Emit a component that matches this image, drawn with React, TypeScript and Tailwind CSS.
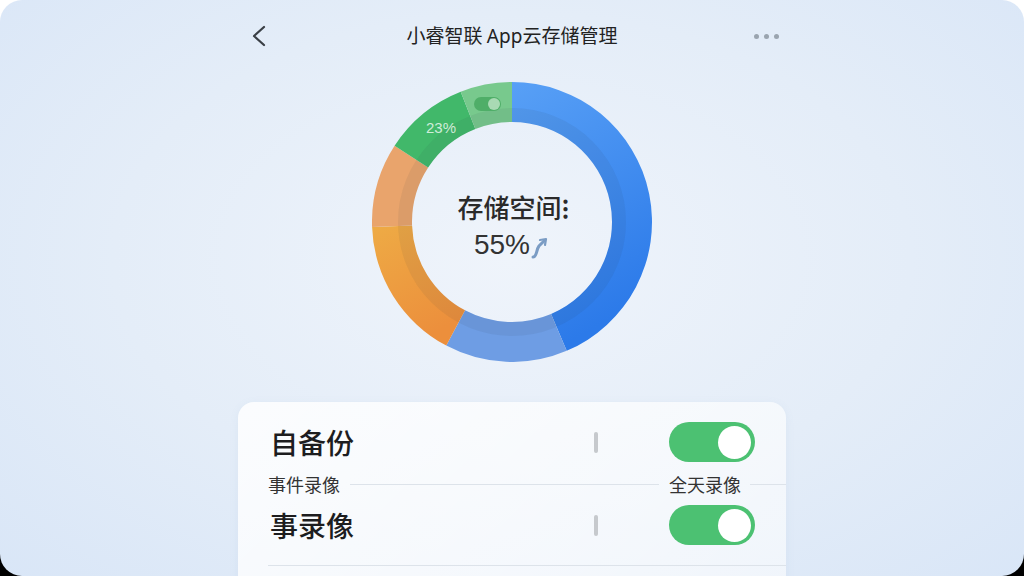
import React from 'react';

const CX = 140;
const CY = 140;
const R_OUT = 140;
const R_IN = 100;

function pt(r: number, deg: number) {
  const a = ((deg - 90) * Math.PI) / 180;
  return [CX + r * Math.cos(a), CY + r * Math.sin(a)];
}

function arc(start: number, end: number) {
  const [x1, y1] = pt(R_OUT, start);
  const [x2, y2] = pt(R_OUT, end);
  const [x3, y3] = pt(R_IN, end);
  const [x4, y4] = pt(R_IN, start);
  const large = end - start > 180 ? 1 : 0;
  return `M${x1} ${y1} A${R_OUT} ${R_OUT} 0 ${large} 1 ${x2} ${y2} L${x3} ${y3} A${R_IN} ${R_IN} 0 ${large} 0 ${x4} ${y4} Z`;
}

const segments = [
  { from: 0, to: 157, fill: 'url(#blueGrad)' },
  { from: 157, to: 208, fill: '#6e9de4' },
  { from: 208, to: 268, fill: 'url(#orangeGrad)' },
  { from: 268, to: 303, fill: '#e9a46c' },
  { from: 303, to: 338.5, fill: '#41b86a' },
  { from: 338.5, to: 360, fill: '#78c98d' },
];

function Donut() {
  return (
    <div className="relative w-[280px] h-[280px]">
      <svg width="280" height="280" viewBox="0 0 280 280" className="absolute inset-0">
        <defs>
          <linearGradient id="blueGrad" x1="0" y1="0" x2="0.3" y2="1">
            <stop offset="0" stopColor="#58a0f6" />
            <stop offset="1" stopColor="#2c7ae9" />
          </linearGradient>
          <linearGradient id="orangeGrad" x1="0" y1="0" x2="0.4" y2="1">
            <stop offset="0" stopColor="#eeab45" />
            <stop offset="1" stopColor="#ec8f3c" />
          </linearGradient>
        </defs>
        {segments.map((s, i) => (
          <path key={i} d={arc(s.from, s.to)} fill={s.fill} />
        ))}
        {/* inner shading band */}
        <circle cx={CX} cy={CY} r={107} fill="none" stroke="rgba(40,50,70,0.07)" strokeWidth={14} />
        {/* small toggle icon in light green segment */}
        <rect x={102} y={15} width={27} height={14} rx={7} fill="#4fae68" />
        <circle cx={122} cy={22} r={6} fill="#a9dab4" />
      </svg>
      <span className="absolute left-[54px] top-[35px] text-[15px] text-white/75 font-['Liberation_Sans',sans-serif]">
        23%
      </span>
      <div className="absolute inset-0 flex flex-col items-center justify-center">
        <div className="text-[26px] leading-[32px] text-[#2a2a2a] font-medium font-['Noto_Sans_CJK_SC',sans-serif] mt-[8px] ml-[2px]">
          存储空间<span className="font-bold">⁝</span>
        </div>
        <div className="flex items-end mt-[6px] ml-[0px]">
          <span className="text-[28px] leading-[32px] text-[#333] font-['Liberation_Sans',sans-serif]">55%</span>
          <svg width="20" height="24" viewBox="0 0 20 24" className="mb-[2px]">
            <path d="M3 22 C7 22 6 15 9 11 L14 6" fill="none" stroke="#7b9cc4" strokeWidth="3" strokeLinecap="round" />
            <path d="M10 5 L16 4 L15 10" fill="none" stroke="#7b9cc4" strokeWidth="2.2" strokeLinecap="round" strokeLinejoin="round" />
          </svg>
        </div>
      </div>
    </div>
  );
}

function Toggle() {
  return (
    <div className="w-[86px] h-[40px] rounded-full bg-[#4cc172] flex items-center justify-end pr-[4px]">
      <div className="w-[33px] h-[33px] rounded-full bg-white" />
    </div>
  );
}

function Row({ label }: { label: string }) {
  return (
    <div className="flex items-center h-[40px] pr-[31px]">
      <span className="text-[28px] font-medium text-[#1d1d1f] ml-[2px] font-['Noto_Sans_CJK_SC',sans-serif] leading-none">
        {label}
      </span>
      <div className="ml-auto w-[4px] h-[21px] rounded-full bg-[#c6c9cd] mr-[71px]" />
      <Toggle />
    </div>
  );
}

export default function App() {
  return (
    <div className="w-[1024px] h-[576px] bg-[linear-gradient(to_bottom,#ffffff_50%,#000000_50%)] overflow-hidden">
      <div className="relative w-full h-full rounded-[22px] overflow-hidden bg-[radial-gradient(ellipse_at_50%_45%,#eff4fb_0%,#e4edf8_55%,#d9e6f7_100%)] font-['Noto_Sans_CJK_SC',sans-serif]">
        {/* header */}
        <div className="flex items-center h-[72px] pl-[250px] pr-[245px]">
          <svg width="18" height="22" viewBox="0 0 18 22">
            <path d="M14 2 L4 11 L14 20" fill="none" stroke="#3a3f45" strokeWidth="2.2" strokeLinecap="round" strokeLinejoin="round" />
          </svg>
          <div className="flex-1 text-center text-[19px] text-[#222] ml-[2px]">
            小睿智联 <span className="font-['Noto_Sans',sans-serif]">App</span>云存储管理
          </div>
          <div className="flex gap-[5px]">
            <div className="w-[5px] h-[5px] rounded-full bg-[#9aa4af]" />
            <div className="w-[5px] h-[5px] rounded-full bg-[#9aa4af]" />
            <div className="w-[5px] h-[5px] rounded-full bg-[#9aa4af]" />
          </div>
        </div>

        <div className="flex justify-center mt-[10px]">
          <Donut />
        </div>

        {/* settings card */}
        <div className="mx-auto mt-[40px] w-[548px] h-[200px] rounded-[16px] bg-[linear-gradient(135deg,rgba(255,255,255,0.85),rgba(255,255,255,0.55))] pt-[20px] pl-[30px] shadow-[0_2px_10px_rgba(120,150,190,0.08)]">
          <Row label="自备份" />
          <div className="flex items-center mt-[11px] h-[22px]">
            <span className="text-[18px] text-[#333] font-['Noto_Sans_CJK_SC',sans-serif]">事件录像</span>
            <div className="flex-1 h-px bg-[#dde3ea] mx-[10px]" />
            <span className="text-[18px] text-[#333] mr-[9px] font-['Noto_Sans_CJK_SC',sans-serif]">全天录像</span>
            <div className="w-[36px] h-px bg-[#dde3ea]" />
          </div>
          <div className="mt-[10px]">
            <Row label="事录像" />
          </div>
          <div className="mt-[20px] h-px bg-[#dde3ea]" />
        </div>
      </div>
    </div>
  );
}
